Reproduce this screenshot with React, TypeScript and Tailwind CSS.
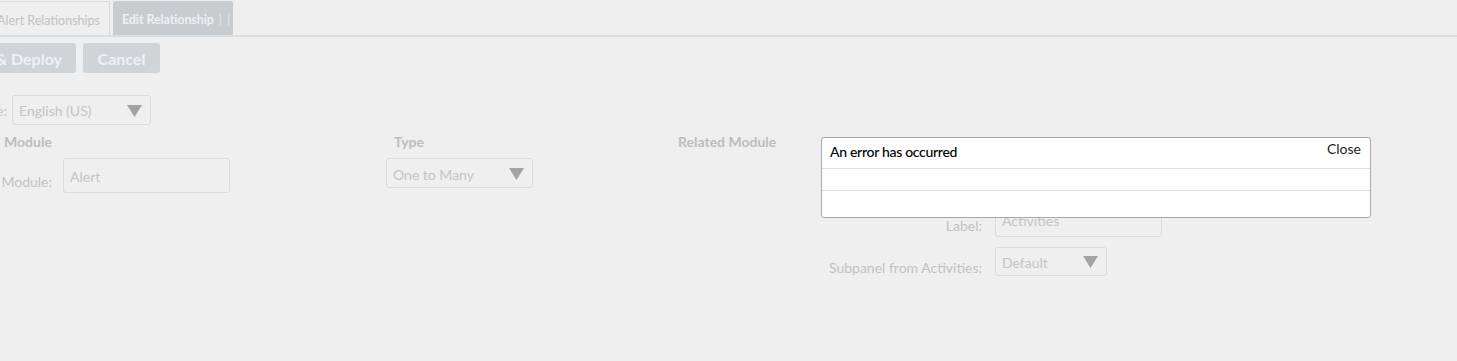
import React from 'react';

const Caret = () => (
  <svg width="15" height="12" viewBox="0 0 15 12" className="shrink-0">
    <path d="M0 0 L15 0 L7.5 12 Z" fill="#a3a3a3" />
  </svg>
);

const Select = ({ value, className }: { value: string; className: string }) => (
  <div className={`flex items-center justify-between border border-[#dcdcdc] rounded-[3px] pl-[6px] pr-[8px] text-[14px] text-[#c4c4c4] ${className}`}>
    <span>{value}</span>
    <Caret />
  </div>
);

export default function App() {
  return (
    <div className="relative min-h-[361px] overflow-hidden bg-[#efefef] font-['Lato',sans-serif] text-[14px]">
      {/* Tabs */}
      <div className="flex items-end h-[37px] border-b-2 border-[#dadee1]">
        <div className="-ml-[10px] w-[120px] h-[34px] flex items-center justify-end pr-[9px] pt-[5px] border border-b-0 border-[#dcdcdc] rounded-t-[2px] text-[12.5px] text-[#c2c2c2] whitespace-nowrap">
          Alert Relationships
        </div>
        <div className="ml-[3px] w-[120px] h-[34px] flex items-center pl-[9px] pt-[5px] bg-[#c9ccce] rounded-t-[2px] text-[12.5px] font-bold text-[#eef0f2] whitespace-nowrap">
          <span className="tracking-[-0.1px]">Edit Relationship</span>
          <span className="ml-[5px] font-normal text-[#e2e5e7]">|</span>
          <span className="ml-[5px] font-normal text-[#e2e5e7]">|</span>
        </div>
      </div>

      {/* Buttons */}
      <div className="flex gap-[7px] mt-[6px]">
        <div className="-ml-[30px] w-[106px] h-[30px] flex items-center justify-end pr-[14px] pt-[2px] rounded-[3px] bg-[#d0d4d7] text-[16px] font-bold text-[#eef1f3] whitespace-nowrap">
          &amp; Deploy
        </div>
        <div className="w-[77px] h-[30px] flex items-center justify-center pt-[2px] rounded-[3px] bg-[#d0d4d7] text-[16px] font-bold text-[#eef1f3]">
          Cancel
        </div>
      </div>

      {/* Language */}
      <div className="flex items-center mt-[22px] h-[30px]">
        <span className="-ml-[4px] w-[16px] pt-[1px] text-[#c2c2c2]">e:</span>
        <Select value="English (US)" className="w-[139px] h-[30px] pt-[1px]" />
      </div>

      {/* Columns */}
      <div className="flex mt-[6px]">
        <div className="w-[386px]">
          <div className="h-[20px] pl-[4px] font-bold text-[#bdbdbd]">Module</div>
          <div className="flex items-center mt-[7px]">
            <span className="w-[63px] pr-[11px] text-right text-[#c2c2c2] mt-[12px]">Module:</span>
            <div className="w-[167px] h-[35px] border border-[#dcdcdc] rounded-[3px] pl-[6px] pt-[7px] text-[#c4c4c4]">
              Alert
            </div>
          </div>
        </div>
        <div className="w-[292px]">
          <div className="h-[20px] pl-[8px] font-bold text-[#bdbdbd]">Type</div>
          <Select value="One to Many" className="mt-[7px] w-[147px] h-[30px] pt-[2px]" />
        </div>
        <div className="flex-1">
          <div className="h-[20px] font-bold text-[#bdbdbd]">Related Module</div>
          <div className="flex items-center mt-[51px]">
            <span className="w-[305px] pr-[1px] text-right text-[#c2c2c2] mt-[11px]">Label:</span>
            <div className="ml-[12px] w-[167px] h-[35px] border border-[#dcdcdc] rounded-[3px] pl-[6px] pt-[7px] text-[#c4c4c4]">
              Activities
            </div>
          </div>
          <div className="flex items-center mt-[8px]">
            <span className="w-[305px] pr-[1px] text-right text-[#c2c2c2] mt-[12px]">Subpanel from Activities:</span>
            <Select value="Default" className="ml-[12px] w-[112px] h-[29px] pt-[1px]" />
          </div>
        </div>
      </div>

      {/* Error dialog */}
      <div className="absolute left-[821px] top-[137px] w-[550px] h-[81px] bg-white border border-[#a9a9a9] rounded-[3px]">
        <div className="flex justify-between h-[31px] border-b border-[#e0e0e0] pl-[8px] pr-[9px]">
          <span className="pt-[3px] text-[14px] font-medium text-black tracking-[-0.3px]">An error has occurred</span>
          <span className="pt-0 text-[14px] text-[#222]">Close</span>
        </div>
        <div className="h-[22px] border-b border-[#e0e0e0]" />
      </div>
    </div>
  );
}
